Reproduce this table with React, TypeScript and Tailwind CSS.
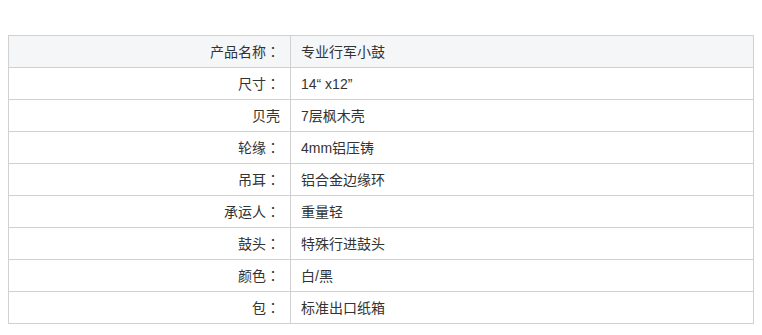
const rows: [string, string][] = [
  ["产品名称：", "专业行军小鼓"],
  ["尺寸：", "14\u201C x12\u201D"],
  ["贝壳", "7层枫木壳"],
  ["轮缘：", "4mm铝压铸"],
  ["吊耳：", "铝合金边缘环"],
  ["承运人：", "重量轻"],
  ["鼓头：", "特殊行进鼓头"],
  ["颜色：", "白/黑"],
  ["包：", "标准出口纸箱"],
];

function Label({ text }: { text: string }) {
  if (!text.endsWith("：")) return <>{text}</>;
  return (
    <>
      {text.slice(0, -1)}
      <span className="font-['Noto_Sans_CJK_TC',sans-serif]">：</span>
    </>
  );
}

export default function App() {
  return (
    <div className="h-[335px] w-[762px] bg-white pt-[35px] pl-2 font-['Liberation_Sans','Noto_Sans_CJK_SC',sans-serif] text-[14px] text-[#333]">
      <table className="w-[746px] table-fixed border-collapse">
        <colgroup>
          <col className="w-[282px]" />
          <col />
        </colgroup>
        <tbody>
          {rows.map(([label, value], i) => (
            <tr key={i} className={i === 0 ? "bg-[#f5f6f8]" : "bg-white"}>
              <td className="h-[32px] border border-[#d0d0d0] pr-[10px] text-right leading-none">
                <Label text={label} />
              </td>
              <td className="h-[32px] border border-[#d0d0d0] pl-[10px] leading-none">
                {value}
              </td>
            </tr>
          ))}
        </tbody>
      </table>
    </div>
  );
}
